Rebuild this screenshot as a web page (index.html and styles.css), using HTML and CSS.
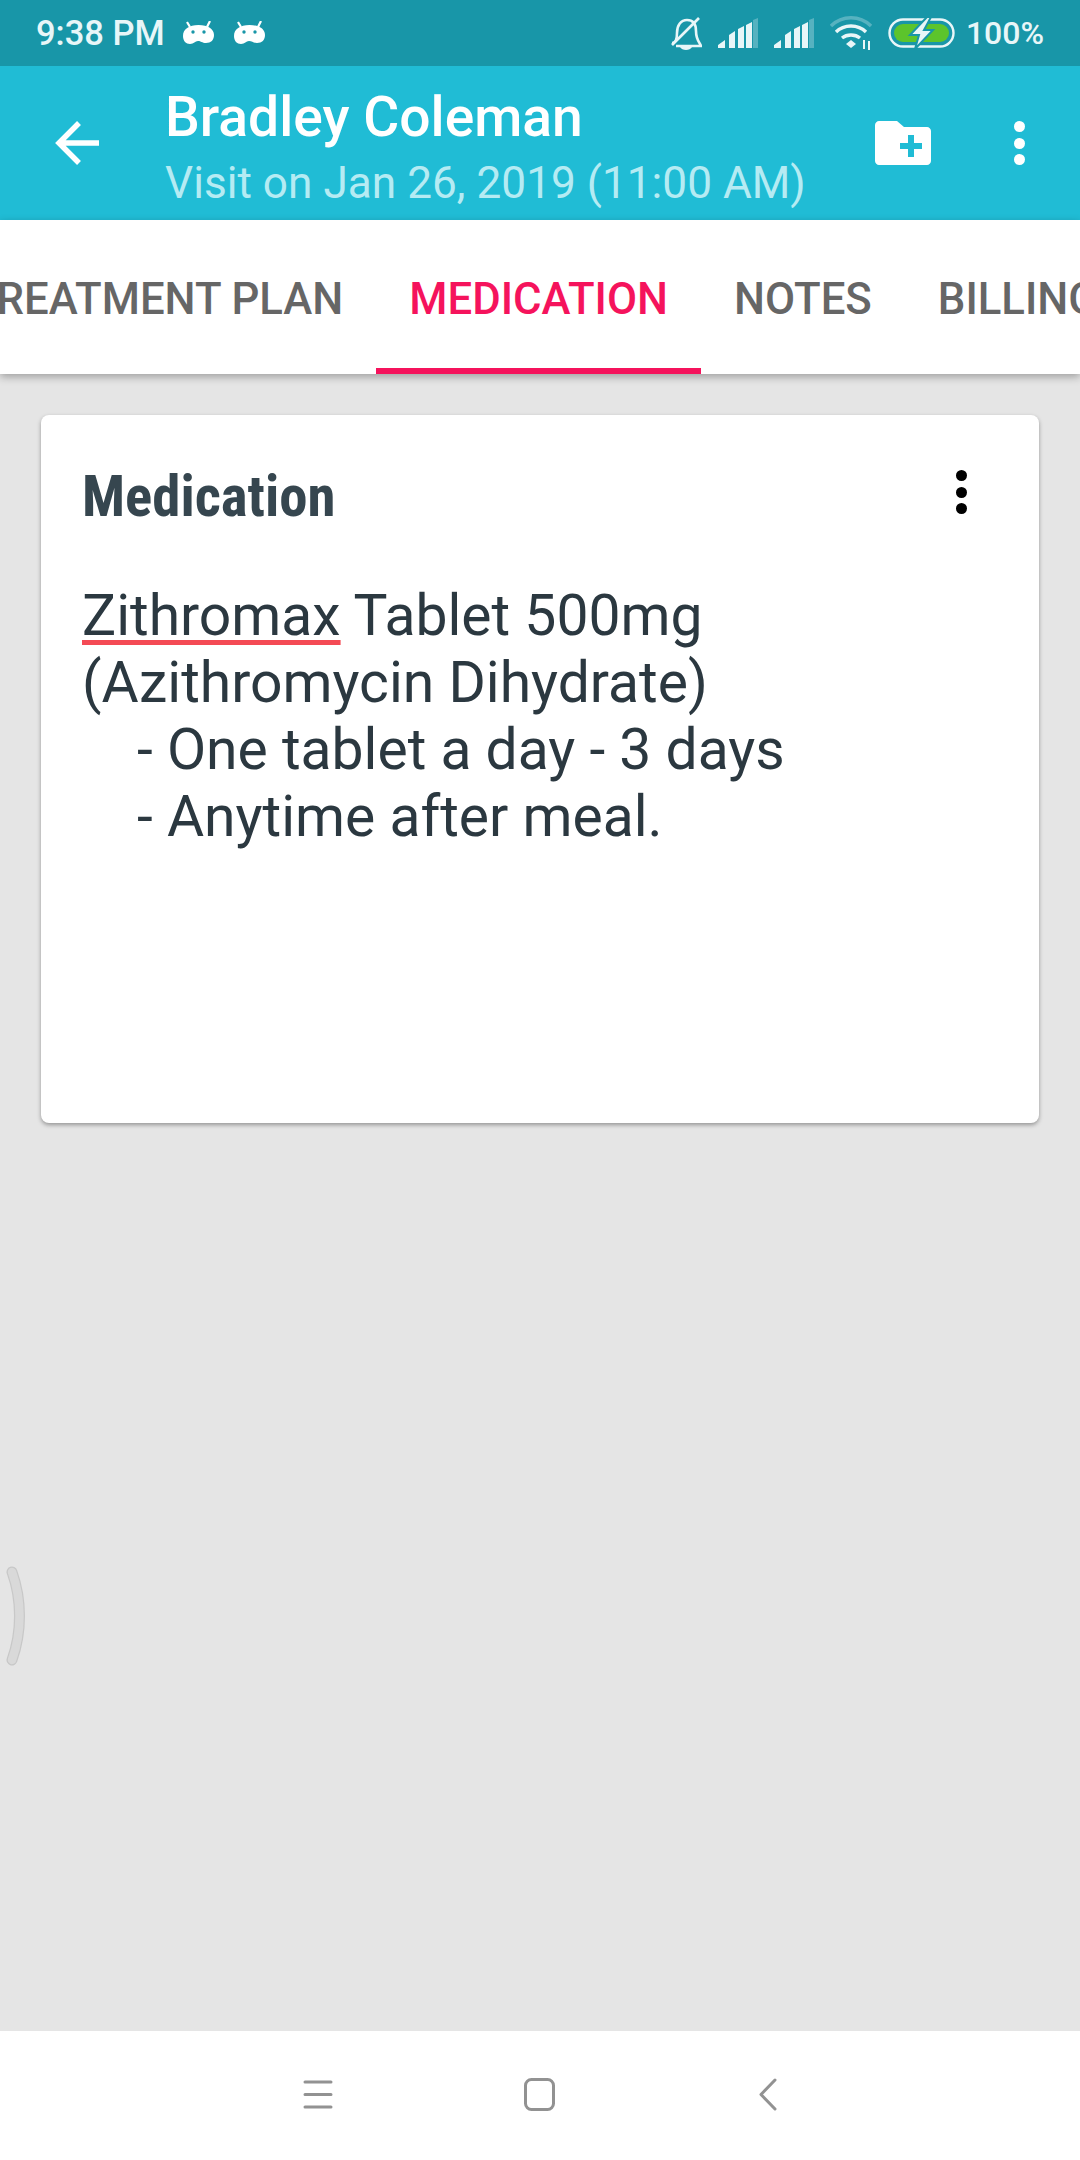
FILE: index.html
```html
<!DOCTYPE html>
<html>
  <head>
    <title>Medication</title>
    <link rel="stylesheet" href="styles.css">
  </head>
  <body>
    <div class="screen">
      <div class="status-bar">
        <span class="time">9:38 PM</span>
        <svg class="bot" width="31" height="24" viewBox="0 0 31 24"><path d="M4 1l3 5M27 0l-3 6" stroke="#fff" stroke-width="2.2"/><path d="M0 15C0 8 6 4 15.500 4S31 8 31 14c0 5-3 8-8 8-4 0-5-2-8-2s-4 3-8 3c-4 0-7-3-7-8z" fill="#fff"/><circle cx="10" cy="11" r="1.700" fill="#1896a8"/><circle cx="21" cy="11" r="1.700" fill="#1896a8"/></svg>
        <svg class="bot" width="31" height="24" viewBox="0 0 31 24"><path d="M4 1l3 5M27 0l-3 6" stroke="#fff" stroke-width="2.2"/><path d="M0 15C0 8 6 4 15.500 4S31 8 31 14c0 5-3 8-8 8-4 0-5-2-8-2s-4 3-8 3c-4 0-7-3-7-8z" fill="#fff"/><circle cx="10" cy="11" r="1.700" fill="#1896a8"/><circle cx="21" cy="11" r="1.700" fill="#1896a8"/></svg>
        <div class="status-right">
          <svg width="32" height="34" viewBox="0 0 32 34" fill="none" stroke="#e8f6f8" stroke-width="2.600"><path d="M2 27c3 0 5-2 5-10 0-8 4-13 10-13s9 4 9 11c0 7 2 10 4 13l1 2H6"/><path d="M2 29L29 2"/><path d="M10 31h12c-2 4-10 4-12 0z" fill="#e8f6f8" stroke="none"/></svg>
          <svg class="signal" width="40" height="30" viewBox="0 0 40 30"><path d="M0 30v-3l7-5v8zM11 30V17l6-4v17zM20 30V11l6-3v22zM28 30V7l6-3v26z" fill="#e8f6f8"/><path d="M35 30V2l5-2v30z" fill="#e8f6f8" opacity=".3"/></svg>
          <svg class="signal" width="40" height="30" viewBox="0 0 40 30"><path d="M0 30v-3l7-5v8zM11 30V17l6-4v17zM20 30V11l6-3v22zM28 30V7l6-3v26z" fill="#e8f6f8"/><path d="M35 30V2l5-2v30z" fill="#e8f6f8" opacity=".3"/></svg>
          <svg class="wifi" width="42" height="34" viewBox="0 0 42 34" fill="none" stroke="#e8f6f8" stroke-width="3.400"><path d="M1 10C12-1 30-1 41 10" opacity=".3"/><path d="M6 16c8-8 22-8 30 0M12 22c5-4 13-4 18 0"/><path d="M16 28l5-4 5 4-5 4z" fill="#e8f6f8" stroke="none"/><path d="M34 24v9M39 25v9" stroke-width="2"/></svg>
          <svg class="battery" width="67" height="32" viewBox="0 0 67 32"><rect x="1.500" y="2.500" width="64" height="27" rx="13.500" fill="none" stroke="#e8f6f8" stroke-width="2.400"/><rect x="6" y="7" width="55" height="18" rx="9" fill="#5cc42c"/><path d="M39 0L22 18h9l-4 14 18-19h-9l7-13z" fill="#e8f6f8" stroke="#1896a8" stroke-width="2"/></svg>
          <span class="battery-text">100%</span>
        </div>
      </div>

      <div class="app-bar">
        <svg class="back" width="44" height="44" viewBox="0 0 44 44" fill="none" stroke="#fff" stroke-width="5.500"><path d="M44 22H3M24 2L4 22l20 20"/></svg>
        <div class="titles">
          <div class="title">Bradley Coleman</div>
          <div class="subtitle">Visit on Jan 26, 2019 (11:00 AM)</div>
        </div>
        <svg class="folder" width="56" height="44" viewBox="0 0 56 44"><path d="M4 0h18l7 6h23c2 0 4 2 4 4v30c0 2-2 4-4 4H4c-2 0-4-2-4-4V4c0-2 2-4 4-4z" fill="#fff"/><path d="M36 14v22M25 25h22" stroke="#20bcd5" stroke-width="6"/></svg>
        <div class="dots dots-white"><i></i><i></i><i></i></div>
      </div>

      <div class="tabs">
        <div class="tab tab-first">TREATMENT PLAN</div>
        <div class="tab active">MEDICATION</div>
        <div class="tab">NOTES</div>
        <div class="tab">BILLING</div>
      </div>

      <div class="content">
        <div class="card">
          <div class="card-head">
            <h2>Medication</h2>
            <div class="dots dots-black"><i></i><i></i><i></i></div>
          </div>
          <div class="card-text">
            <div><u>Zithromax</u> Tablet 500mg</div>
            <div>(Azithromycin Dihydrate)</div>
            <div class="indent">- One tablet a day - 3 days</div>
            <div class="indent">- Anytime after meal.</div>
          </div>
        </div>
        <svg class="edge-handle" width="30" height="100" viewBox="0 0 30 100" fill="none"><path d="M12 6c10 28 10 60 0 88" stroke="#c8c8c8" stroke-width="11" stroke-linecap="round"/><path d="M12 6c10 28 10 60 0 88" stroke="#d9d9d9" stroke-width="8.500" stroke-linecap="round"/></svg>
      </div>

      <div class="nav-bar">
        <svg class="nav-menu" width="30" height="29" viewBox="0 0 30 29" stroke="#929292" stroke-width="3" stroke-linecap="round"><path d="M2 2h26M2 14.500h26M2 27h26"/></svg>
        <svg class="nav-home" width="31" height="33" viewBox="0 0 31 33" fill="none" stroke="#929292" stroke-width="3"><rect x="1.500" y="1.500" width="28" height="30" rx="6"/></svg>
        <svg width="18" height="33" viewBox="0 0 18 33" fill="none" stroke="#929292" stroke-width="3" stroke-linecap="round" stroke-linejoin="round"><path d="M16 2L2 16.500l14 14.500"/></svg>
      </div>
    </div>
  </body>
</html>
```

FILE: styles.css
```css
* {
  box-sizing: border-box;
}
html,
body {
  margin: 0;
  padding: 0;
}
body {
  font-family: Roboto, "Noto Sans", sans-serif;
  width: 1080px;
  height: 2160px;
  overflow: hidden;
}
.screen {
  display: flex;
  flex-direction: column;
  width: 1080px;
  height: 2160px;
}
.status-bar {
  height: 66px;
  background-color: #1896a8;
  color: #e8f6f8;
  display: flex;
  align-items: center;
  padding: 0 36px 0 36px;
  flex-shrink: 0;
}
.time {
  font-size: 34.5px;
  font-weight: 500;
  margin-right: 18px;
}
.bot {
  margin-right: 20px;
}
.status-right {
  margin-left: auto;
  display: flex;
  align-items: center;
  gap: 16px;
}
.battery {
  margin-right: -5px;
}
.battery-text {
  font-size: 32px;
  font-weight: 500;
}
.app-bar {
  height: 154px;
  background-color: #20bcd5;
  display: flex;
  align-items: center;
  flex-shrink: 0;
}
.back {
  margin-left: 55px;
  margin-right: 66px;
}
.titles {
  flex: 1;
  padding-top: 13px;
}
.title {
  color: #fff;
  font-size: 55.2px;
  font-weight: 500;
  line-height: 66px;
}
.subtitle {
  color: #b5ebf3;
  font-size: 44.2px;
  line-height: 66px;
}
.folder {
  margin-right: 83px;
}
.dots {
  display: flex;
  flex-direction: column;
  gap: 5.5px;
}
.dots i {
  display: block;
  width: 11px;
  height: 11px;
  border-radius: 50%;
}
.dots-white {
  margin-right: 55px;
}
.dots-white i {
  background-color: #fff;
}
.dots-black i {
  background-color: #000;
}
.tabs {
  height: 154px;
  background-color: #fff;
  display: flex;
  flex-shrink: 0;
  overflow: hidden;
  box-shadow: 0 3px 8px rgba(0, 0, 0, 0.3);
  position: relative;
  z-index: 1;
}
.tab {
  color: #666;
  font-size: 43.7px;
  font-weight: 500;
  height: 154px;
  line-height: 158px;
  padding: 0 33px;
  white-space: nowrap;
  flex-shrink: 0;
}
.tab-first {
  margin-left: -63px;
}
.tab.active {
  color: #f5135c;
  border-bottom: 6px solid #f5135c;
}
.content {
  flex: 1;
  background-color: #e5e5e5;
  padding: 41px;
  position: relative;
}
.card {
  background-color: #fff;
  height: 708px;
  border-radius: 8px;
  padding: 52px 42px 52px 41px;
  box-shadow: 0 2px 4px rgba(0, 0, 0, 0.35);
}
.card-head {
  display: flex;
  justify-content: space-between;
  align-items: flex-start;
  height: 115px;
}
.card-head h2 {
  margin: 0;
  color: #36464f;
  font-size: 56.8px;
  font-weight: 700;
  font-stretch: condensed;
  line-height: 60px;
}
.dots-black {
  margin-right: 30px;
  margin-top: 3px;
}
.card-text {
  color: #2b3840;
  font-size: 57px;
  line-height: 67px;
}
.card-text u {
  text-decoration-color: #f44a55;
  text-decoration-thickness: 5px;
  text-underline-offset: 5px;
}
.indent {
  padding-left: 55px;
}
.edge-handle {
  position: absolute;
  left: 0;
  top: 1192px;
}
.nav-bar {
  height: 129px;
  background-color: #fff;
  display: flex;
  align-items: center;
  flex-shrink: 0;
  padding: 0 0 2px 303px;
}
.nav-menu {
  margin-right: 191px;
}
.nav-home {
  margin-right: 204px;
}
```
